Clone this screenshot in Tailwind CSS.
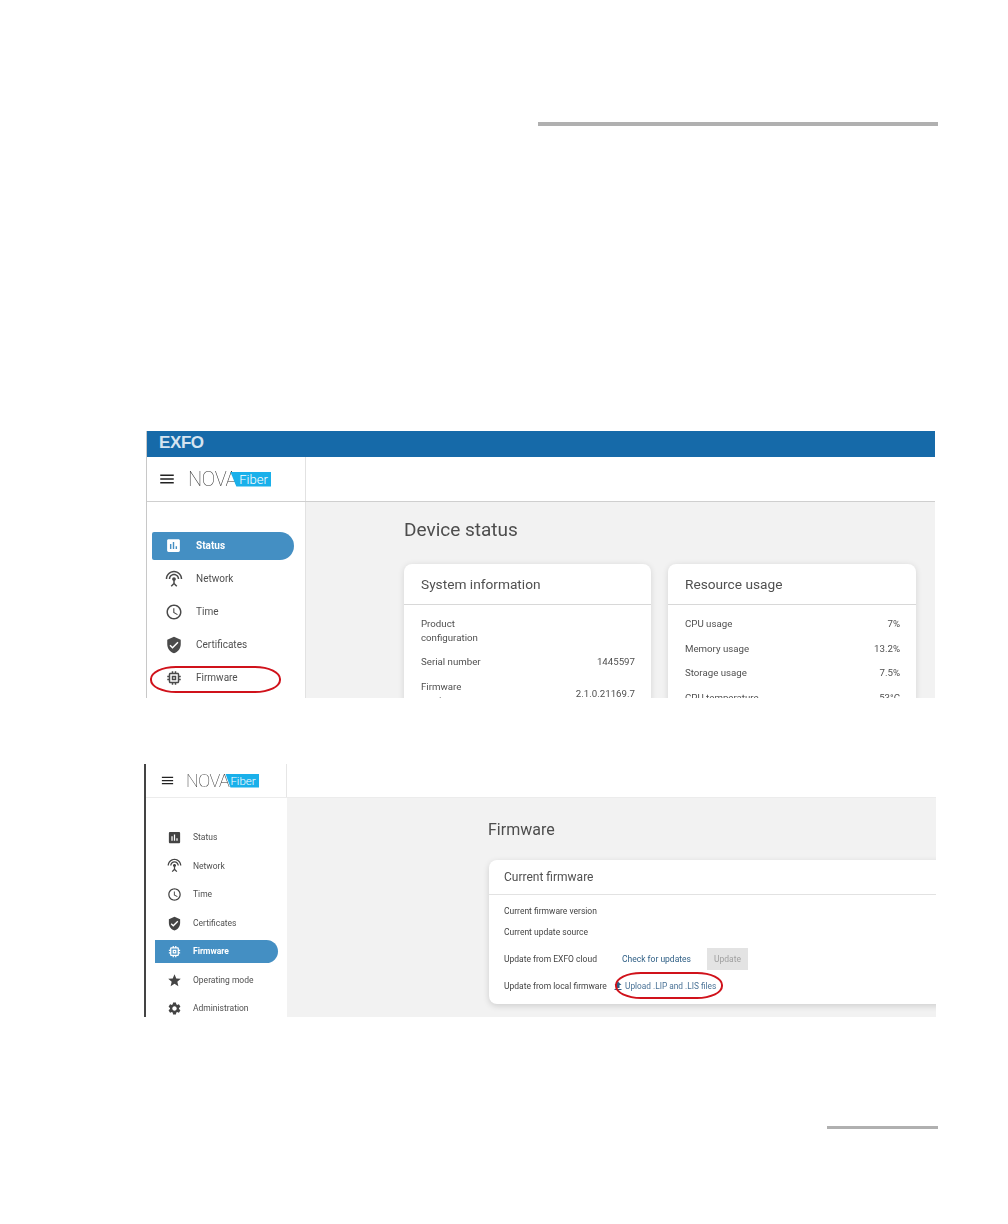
<!DOCTYPE html>
<html lang="en">

<head>
    <meta charset="UTF-8">
    <meta name="viewport" content="width=device-width, initial-scale=1.0">
    <title>Firmware - NOVA Fiber</title>
    <script src="https://cdn.jsdelivr.net/npm/@tailwindcss/browser@4"></script>
</head>

<body class="bg-white font-['Roboto',sans-serif] text-[#505050]">
    <svg class="hidden">
        <symbol id="i-poll" viewBox="0 0 24 24"><path d="M19 3H5c-1.1 0-2 .9-2 2v14c0 1.1.9 2 2 2h14c1.1 0 2-.9 2-2V5c0-1.1-.9-2-2-2zM9 17H7v-7h2v7zm4 0h-2V7h2v10zm4 0h-2v-4h2v4z"/></symbol>
        <symbol id="i-antenna" viewBox="0 0 24 24"><path d="M12 5c-3.87 0-7 3.13-7 7h2c0-2.76 2.24-5 5-5s5 2.24 5 5h2c0-3.87-3.13-7-7-7zm1 9.29c.88-.39 1.5-1.26 1.5-2.29 0-1.38-1.12-2.5-2.5-2.5S9.5 10.62 9.5 12c0 1.02.62 1.9 1.5 2.29v3.3L7.59 21 9 22.41l3-3 3 3L16.41 21 13 17.59v-3.3zM12 1C5.93 1 1 5.93 1 12h2c0-4.97 4.03-9 9-9s9 4.03 9 9h2c0-6.07-4.93-11-11-11z"/></symbol>
        <symbol id="i-time" viewBox="0 0 24 24"><path d="M11.99 2C6.47 2 2 6.48 2 12s4.47 10 9.99 10C17.52 22 22 17.52 22 12S17.52 2 11.99 2zM12 20c-4.42 0-8-3.58-8-8s3.58-8 8-8 8 3.58 8 8-3.58 8-8 8zm.5-13H11v6l5.25 3.15.75-1.23-4.5-2.67z"/></symbol>
        <symbol id="i-shield" viewBox="0 0 24 24"><path d="M12 1L3 5v6c0 5.55 3.84 10.74 9 12 5.16-1.26 9-6.45 9-12V5l-9-4zm-2 16l-4-4 1.41-1.41L10 14.17l6.59-6.59L18 9l-8 8z"/></symbol>
        <symbol id="i-chip" viewBox="0 0 24 24"><path d="M15 9H9v6h6V9zm-2 4h-2v-2h2v2zm8-2V9h-2V7c0-1.1-.9-2-2-2h-2V3h-2v2h-2V3H9v2H7c-1.1 0-2 .9-2 2v2H3v2h2v2H3v2h2v2c0 1.1.9 2 2 2h2v2h2v-2h2v2h2v-2h2c1.1 0 2-.9 2-2v-2h2v-2h-2v-2h2zm-4 6H7V7h10v10z"/></symbol>
        <symbol id="i-star" viewBox="0 0 24 24"><path d="M12 17.27L18.18 21l-1.64-7.03L22 9.24l-7.19-.61L12 2 9.19 8.63 2 9.24l5.46 4.73L5.82 21z"/></symbol>
        <symbol id="i-gear" viewBox="0 0 24 24"><path d="M19.14 12.94c.04-.3.06-.61.06-.94 0-.32-.02-.64-.07-.94l2.03-1.58c.18-.14.23-.41.12-.61l-1.92-3.32c-.12-.22-.37-.29-.59-.22l-2.39.96c-.5-.38-1.03-.7-1.62-.94l-.36-2.54c-.04-.24-.24-.41-.48-.41h-3.84c-.24 0-.43.17-.47.41l-.36 2.54c-.59.24-1.13.57-1.62.94l-2.39-.96c-.22-.08-.47 0-.59.22L2.74 8.87c-.12.21-.08.47.12.61l2.03 1.58c-.05.3-.09.63-.09.94s.02.64.07.94l-2.03 1.58c-.18.14-.23.41-.12.61l1.92 3.32c.12.22.37.29.59.22l2.39-.96c.5.38 1.03.7 1.62.94l.36 2.54c.05.24.24.41.48.41h3.84c.24 0 .44-.17.47-.41l.36-2.54c.59-.24 1.13-.56 1.62-.94l2.39.96c.22.08.47 0 .59-.22l1.92-3.32c.12-.22.07-.47-.12-.61l-2.01-1.58zM12 15.6c-1.98 0-3.6-1.62-3.6-3.6s1.62-3.6 3.6-3.6 3.6 1.62 3.6 3.6-1.62 3.6-3.6 3.6z"/></symbol>
        <symbol id="i-upload" viewBox="0 0 24 24"><path d="M9 16h6v-6h4l-7-7-7 7h4zm-4 2h14v2H5z"/></symbol>
        <symbol id="i-menu" viewBox="0 0 24 24"><path d="M3 18h18v-2H3v2zm0-5h18v-2H3v2zm0-7v2h18V6H3z"/></symbol>
    </svg>

    <div class="w-[1008px] h-[1224px] overflow-hidden pt-[122px]">
        <div class="ml-[538px] w-[400px] h-1 bg-[#b0b0b0]"></div>

        <!-- device status screenshot -->
        <div class="relative ml-[146px] mt-[305px] w-[789px] h-[267px] overflow-hidden border-l border-[#c8c8c8] blur-[0.35px]">
            <div class="h-[26px] bg-[#166aa9] pl-3 flex items-center">
                <span class="text-[17px] leading-none font-bold tracking-[-0.4px] mb-[3px] text-[#d5e4f0] font-['Liberation_Sans',sans-serif]">EXFO</span>
            </div>
            <div class="h-[45px] flex border-b border-[#cfcfcf]">
                <div class="w-[159px] flex items-center border-r border-[#e2e2e2]">
                    <svg class="w-[18px] h-[18px] ml-[11px] fill-[#222]"><use href="#i-menu"/></svg>
                    <div class="ml-[12px] flex items-center">
                        <span class="text-[20px] leading-none font-thin tracking-[-0.3px] text-[#333]">NOVA</span>
                        <span class="ml-[-7px] w-[41px] h-[15px] pl-[9px] bg-[#1ab0ea] text-white text-[13px] font-light leading-[15px] [clip-path:polygon(0_0,100%_0,100%_100%,15%_100%)]">Fiber</span>
                    </div>
                </div>
            </div>
            <div class="flex h-[196px]">
                <div class="w-[159px] shrink-0 pt-[27px] pl-[5px] text-[10px] border-r border-[#e2e2e2]">
                    <div class="h-[33px] flex items-center">
                        <div class="w-[142px] h-7 flex items-center rounded-r-[14px] rounded-l-[2px] bg-[#448fc3] text-white font-bold">
                            <svg class="w-[17px] h-[17px] ml-[13px] fill-white"><use href="#i-poll"/></svg>
                            <span class="ml-[14px]">Status</span>
                        </div>
                    </div>
                    <div class="h-[33px] flex items-center"><svg class="w-[18px] h-[18px] ml-[13px] fill-[#4a4a4a]"><use href="#i-antenna"/></svg><span class="ml-[13px]">Network</span></div>
                    <div class="h-[33px] flex items-center"><svg class="w-[18px] h-[18px] ml-[13px] fill-[#4a4a4a]"><use href="#i-time"/></svg><span class="ml-[13px]">Time</span></div>
                    <div class="h-[33px] flex items-center"><svg class="w-[18px] h-[18px] ml-[13px] fill-[#4a4a4a]"><use href="#i-shield"/></svg><span class="ml-[13px]">Certificates</span></div>
                    <div class="h-[33px] flex items-center"><svg class="w-[18px] h-[18px] ml-[13px] fill-[#4a4a4a]"><use href="#i-chip"/></svg><span class="ml-[13px]">Firmware</span></div>
                </div>
                <div class="flex-1 bg-[#f2f2f2] pl-[98px] pt-[16px]">
                    <h1 class="text-[19px] leading-6 text-[#4d4d4d]">Device status</h1>
                    <div class="flex gap-[17px] mt-[22px]">
                        <div class="w-[247px] h-[160px] bg-white rounded-t-lg shadow-[0_1px_6px_rgba(0,0,0,0.12)]">
                            <div class="h-[41px] pl-[17px] flex items-center border-b border-[#d8d8d8] text-[13.7px]">System information</div>
                            <div class="pl-[17px] pr-4 text-[9.7px] leading-[14px] pt-3">
                                <div>Product<br>configuration</div>
                                <div class="flex justify-between mt-[10px]"><span>Serial number</span><span>1445597</span></div>
                                <div class="flex justify-between items-center mt-[11px]"><span>Firmware<br>version</span><span>2.1.0.21169.7</span></div>
                            </div>
                        </div>
                        <div class="w-[248px] h-[160px] bg-white rounded-t-lg shadow-[0_1px_6px_rgba(0,0,0,0.12)]">
                            <div class="h-[41px] pl-[17px] flex items-center border-b border-[#d8d8d8] text-[13.7px]">Resource usage</div>
                            <div class="pl-[17px] pr-4 text-[9.7px] leading-[14px] pt-3 flex flex-col gap-[10.7px]">
                                <div class="flex justify-between"><span>CPU usage</span><span>7%</span></div>
                                <div class="flex justify-between"><span>Memory usage</span><span>13.2%</span></div>
                                <div class="flex justify-between"><span>Storage usage</span><span>7.5%</span></div>
                                <div class="flex justify-between"><span>CPU temperature</span><span>53°C</span></div>
                            </div>
                        </div>
                    </div>
                </div>
            </div>
            <div class="absolute left-[3px] top-[235px] w-[131px] h-[27px] rounded-[26px/13px] border-2 border-[#d0121b]"></div>
        </div>

        <!-- firmware screenshot -->
        <div class="relative ml-[144px] mt-[66px] w-[792px] h-[253px] overflow-hidden border-l-2 border-[#444] blur-[0.35px]">
            <div class="h-[34px] flex border-b border-[#ececec]">
                <div class="w-[141px] flex items-center border-r border-[#e6e6e6]">
                    <svg class="w-[15px] h-[15px] ml-[14px] fill-[#222]"><use href="#i-menu"/></svg>
                    <div class="ml-[11px] flex items-center">
                        <span class="text-[18px] leading-none font-thin tracking-[-0.5px] text-[#333]">NOVA</span>
                        <span class="ml-[-4px] w-[34px] h-[14px] pl-[5px] bg-[#1ab0ea] text-white text-[11.5px] font-light leading-[14px] [clip-path:polygon(0_0,100%_0,100%_100%,15%_100%)]">Fiber</span>
                    </div>
                </div>
            </div>
            <div class="flex h-[219px]">
                <div class="w-[141px] shrink-0 pt-[25px] pl-[9px] text-[8.5px]">
                    <div class="h-[28.6px] flex items-center"><svg class="w-[15px] h-[15px] ml-[12px] fill-[#444]"><use href="#i-poll"/></svg><span class="ml-[11px]">Status</span></div>
                    <div class="h-[28.6px] flex items-center"><svg class="w-[15px] h-[15px] ml-[12px] fill-[#444]"><use href="#i-antenna"/></svg><span class="ml-[11px]">Network</span></div>
                    <div class="h-[28.6px] flex items-center"><svg class="w-[15px] h-[15px] ml-[12px] fill-[#444]"><use href="#i-time"/></svg><span class="ml-[11px]">Time</span></div>
                    <div class="h-[28.6px] flex items-center"><svg class="w-[15px] h-[15px] ml-[12px] fill-[#444]"><use href="#i-shield"/></svg><span class="ml-[11px]">Certificates</span></div>
                    <div class="h-[28.6px] flex items-center">
                        <div class="w-[123px] h-[23px] flex items-center rounded-r-[12px] bg-[#448fc3] text-white font-bold">
                            <svg class="w-[15px] h-[15px] ml-[12px] fill-white"><use href="#i-chip"/></svg>
                            <span class="ml-[11px]">Firmware</span>
                        </div>
                    </div>
                    <div class="h-[28.6px] flex items-center"><svg class="w-[15px] h-[15px] ml-[12px] fill-[#444]"><use href="#i-star"/></svg><span class="ml-[11px]">Operating mode</span></div>
                    <div class="h-[28.6px] flex items-center"><svg class="w-[15px] h-[15px] ml-[12px] fill-[#444]"><use href="#i-gear"/></svg><span class="ml-[11px]">Administration</span></div>
                </div>
                <div class="flex-1 bg-[#f2f2f2] pl-[201px] pt-[22px]">
                    <h1 class="text-[16px] leading-5 text-[#4d4d4d]">Firmware</h1>
                    <div class="ml-[1px] w-[460px] h-[144px] mt-[20px] bg-white rounded-lg shadow-[0_2px_6px_rgba(0,0,0,0.15)]">
                        <div class="h-[35px] pl-[15px] flex items-center border-b border-[#e2e2e2] text-[12px]">Current firmware</div>
                        <div class="pl-[15px] text-[8.5px] leading-3 text-[#444]">
                            <div class="pt-[10px]">Current firmware version</div>
                            <div class="mt-[9px]">Current update source</div>
                            <div class="mt-[10px] h-[22px] flex items-center">
                                <span class="w-[118px]">Update from EXFO cloud</span>
                                <span class="text-[#2f5f85]">Check for updates</span>
                                <span class="ml-[16px] w-[41px] h-[22px] flex items-center justify-center bg-[#e3e3e3] text-[#a0a0a0]">Update</span>
                            </div>
                            <div class="mt-[10px] flex items-center">
                                <span class="w-[108px]">Update from local firmware</span>
                                <svg class="w-3 h-3 fill-[#2f5f85]"><use href="#i-upload"/></svg>
                                <span class="ml-[1px] text-[8.3px] text-[#4a7296]">Upload .LIP and .LIS files</span>
                            </div>
                        </div>
                    </div>
                </div>
            </div>
            <div class="absolute left-[469px] top-[208px] w-[108px] h-[27px] rounded-[26px/13px] border-2 border-[#d0121b]"></div>
        </div>

        <div class="ml-[827px] mt-[109px] w-[111px] h-[3px] bg-[#b0b0b0]"></div>
    </div>
</body>

</html>
